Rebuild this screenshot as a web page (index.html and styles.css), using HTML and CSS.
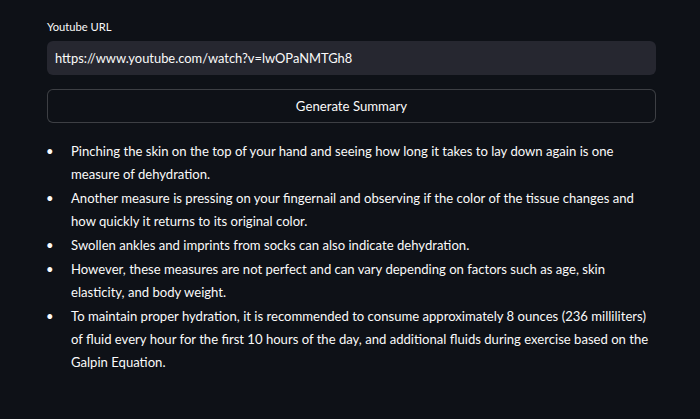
FILE: index.html
```html
<!DOCTYPE html>
<html>
<head>
<meta charset="utf-8">
<link rel="stylesheet" href="styles.css">
</head>
<body>
<main class="app">
  <label class="label">Youtube URL</label>
  <div class="input">https://www.youtube.com/watch?v=lwOPaNMTGh8</div>
  <button class="btn">Generate Summary</button>
  <ul class="summary">
    <li>Pinching the skin on the top of your hand and seeing how long it takes to lay down again is one measure of dehydration.</li>
    <li>Another measure is pressing on your fingernail and observing if the color of the tissue changes and how quickly it returns to its original color.</li>
    <li>Swollen ankles and imprints from socks can also indicate dehydration.</li>
    <li>However, these measures are not perfect and can vary depending on factors such as age, skin elasticity, and body weight.</li>
    <li>To maintain proper hydration, it is recommended to consume approximately 8 ounces (236 milliliters) of fluid every hour for the first 10 hours of the day, and additional fluids during exercise based on the Galpin Equation.</li>
  </ul>
</main>
</body>
</html>
```
FILE: styles.css
```css
html, body {
  margin: 0;
  padding: 0;
  background: #0e1117;
  height: 100%;
}
body {
  font-family: Lato, "Noto Sans", sans-serif;
  color: #fafafa;
}
.app {
  padding: 19px 44px 0 47px;
  display: flex;
  flex-direction: column;
}
.label {
  font-size: 11.2px;
  line-height: 16px;
  margin-bottom: 6px;
}
.input {
  background: #262730;
  border-radius: 6px;
  height: 34px;
  box-sizing: border-box;
  padding: 0 8px;
  display: flex;
  align-items: center;
  font-size: 12.9px;
}
.btn {
  margin-top: 14px;
  height: 34px;
  background: #0e1117;
  border: 1px solid rgba(250,250,250,0.2);
  border-radius: 6px;
  color: #fafafa;
  font-family: inherit;
  font-size: 13.2px;
}
.summary {
  margin: 17px 0 0;
  padding: 0;
  list-style: none;
  font-size: 13.1px;
  line-height: 23px;
}
.summary li {
  margin-bottom: 1px;
  padding-left: 24px;
}
.summary li::before {
  content: "\2022";
  display: inline-block;
  width: 24px;
  margin-left: -25px;
  margin-right: 1px;
  font-size: 13px;
}
```
